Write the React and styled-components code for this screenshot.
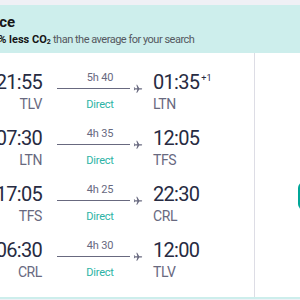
import React from 'react';
import styled, { createGlobalStyle } from 'styled-components';

const GlobalStyle = createGlobalStyle`
    html, body {
        margin: 0;
        padding: 0;
        background: #eff0f5;
    }
    body {
        font-family: Roboto, "Liberation Sans", Arial, sans-serif;
        color: #161616;
    }
`;

const Page = styled.div`
    width: 300px;
    height: 300px;
    overflow: hidden;
    padding-top: 5px;
    box-sizing: border-box;
`;

const Card = styled.article`
    width: 600px;
    margin-left: -120px;
    background: #fff;
    border: 2px solid #cdeeec;
    border-top: 0;
    border-radius: 0 0 8px 8px;
`;

const Banner = styled.header`
    background: #cdeeec;
    padding: 7px 16px 3px 31px;
`;
const BannerTitle = styled.div`
    font-size: 15px;
    line-height: 20px;
    font-weight: 700;
    color: #161616;
`;
const BannerText = styled.div`
    font-size: 11px;
    line-height: 16px;
    letter-spacing: -0.5px;
    color: #545860;
    b {
        color: #161616;
        letter-spacing: 0;
    }
`;
const Sub = styled.sub`
    font-size: 7px;
    vertical-align: -1px;
`;

const Body = styled.div`
    display: flex;
`;

const Legs = styled.div`
    width: 372px;
    padding: 10px 0;
`;

const Leg = styled.div`
    display: flex;
    align-items: center;
    height: 56px;
    padding-left: 14px;
`;

const Carrier = styled.div`
    width: 60px;
    margin-right: 12px;
    font-size: 11px;
    color: #68697f;
`;

const Stop = styled.div`
    display: flex;
    flex-direction: column;
    width: ${({ $w }) => $w || 'auto'};
    text-align: ${({ $align }) => $align || 'left'};
    flex: ${({ $grow }) => ($grow ? 1 : 'none')};
`;
const Time = styled.div`
    font-size: 20px;
    line-height: 24px;
    letter-spacing: -0.7px;
    color: #272b42;
`;
const NextDay = styled.sup`
    font-size: 9px;
    line-height: 0;
    letter-spacing: 0;
    vertical-align: 8px;
    margin-left: 2px;
`;
const Airport = styled.div`
    font-size: 14px;
    line-height: 18px;
    letter-spacing: -0.4px;
    margin-top: 1px;
    color: #68697f;
`;

const Route = styled.div`
    display: flex;
    flex-direction: column;
    align-items: center;
    width: 86px;
    margin: 0 10px 0 15px;
`;
const Duration = styled.div`
    font-size: 11px;
    line-height: 14px;
    letter-spacing: -0.2px;
    color: #68697f;
`;
const Track = styled.div`
    display: flex;
    align-items: center;
    gap: 3px;
    width: 100%;
    height: 8px;
`;
const Line = styled.div`
    flex: 1;
    height: 1px;
    background: #68697f;
`;
const Stops = styled.div`
    margin-top: 5px;
    font-size: 11px;
    line-height: 14px;
    letter-spacing: -0.2px;
    color: #2cb3a5;
`;

const PricePanel = styled.div`
    flex: 1;
    display: flex;
    flex-direction: column;
    align-items: flex-start;
    justify-content: center;
    border-left: 1px solid #dddde5;
    padding-left: 43px;
    box-sizing: border-box;
`;
const PriceBox = styled.div`
    display: flex;
    flex-direction: column;
    align-items: center;
    width: 140px;
`;
const Price = styled.div`
    font-size: 24px;
    line-height: 36px;
    font-weight: 700;
    margin-bottom: 6px;
`;
const SelectButton = styled.button`
    width: 140px;
    height: 28px;
    border: 0;
    border-radius: 6px;
    background: #00a698;
    color: #fff;
    font: 700 14px Roboto, sans-serif;
`;

const Plane = () => (
    <svg width="10" height="10" viewBox="0 0 24 24" fill="#68697f">
        <path
            transform="rotate(90 12 12)"
            d="M21 16v-2l-8-5V3.5c0-.83-.67-1.5-1.5-1.5S10 2.67 10 3.5V9l-8 5v2l8-2.5V19l-2 1.5V22l3.5-1 3.5 1v-1.5L13 19v-5.5l8 2.5z"
        />
    </svg>
);

const legs = [
    { carrier: 'easyJet', dep: '21:55', from: 'TLV', dur: '5h 40', arr: '01:35', to: 'LTN', plus: '+1' },
    { carrier: 'Ryanair', dep: '07:30', from: 'LTN', dur: '4h 35', arr: '12:05', to: 'TFS' },
    { carrier: 'Ryanair', dep: '17:05', from: 'TFS', dur: '4h 25', arr: '22:30', to: 'CRL' },
    { carrier: 'Ryanair', dep: '06:30', from: 'CRL', dur: '4h 30', arr: '12:00', to: 'TLV' },
];

const App = () => (
    <Page>
        <GlobalStyle />
        <Card>
            <Banner>
                <BannerTitle>Greener choice</BannerTitle>
                <BannerText>
                    This flight emits <b>21% less CO<Sub>2</Sub></b> than the average for your search
                </BannerText>
            </Banner>
            <Body>
                <Legs>
                    {legs.map((leg) => (
                        <Leg key={leg.dep}>
                            <Carrier>{leg.carrier}</Carrier>
                            <Stop $w="74px" $align="right">
                                <Time>{leg.dep}</Time>
                                <Airport>{leg.from}</Airport>
                            </Stop>
                            <Route>
                                <Duration>{leg.dur}</Duration>
                                <Track>
                                    <Line />
                                    <Plane />
                                </Track>
                                <Stops>Direct</Stops>
                            </Route>
                            <Stop $grow>
                                <Time>
                                    {leg.arr}
                                    {leg.plus && <NextDay>{leg.plus}</NextDay>}
                                </Time>
                                <Airport>{leg.to}</Airport>
                            </Stop>
                        </Leg>
                    ))}
                </Legs>
                <PricePanel>
                    <PriceBox>
                        <Price>$612</Price>
                        <SelectButton>Select →</SelectButton>
                    </PriceBox>
                </PricePanel>
            </Body>
        </Card>
    </Page>
);

export default App;
